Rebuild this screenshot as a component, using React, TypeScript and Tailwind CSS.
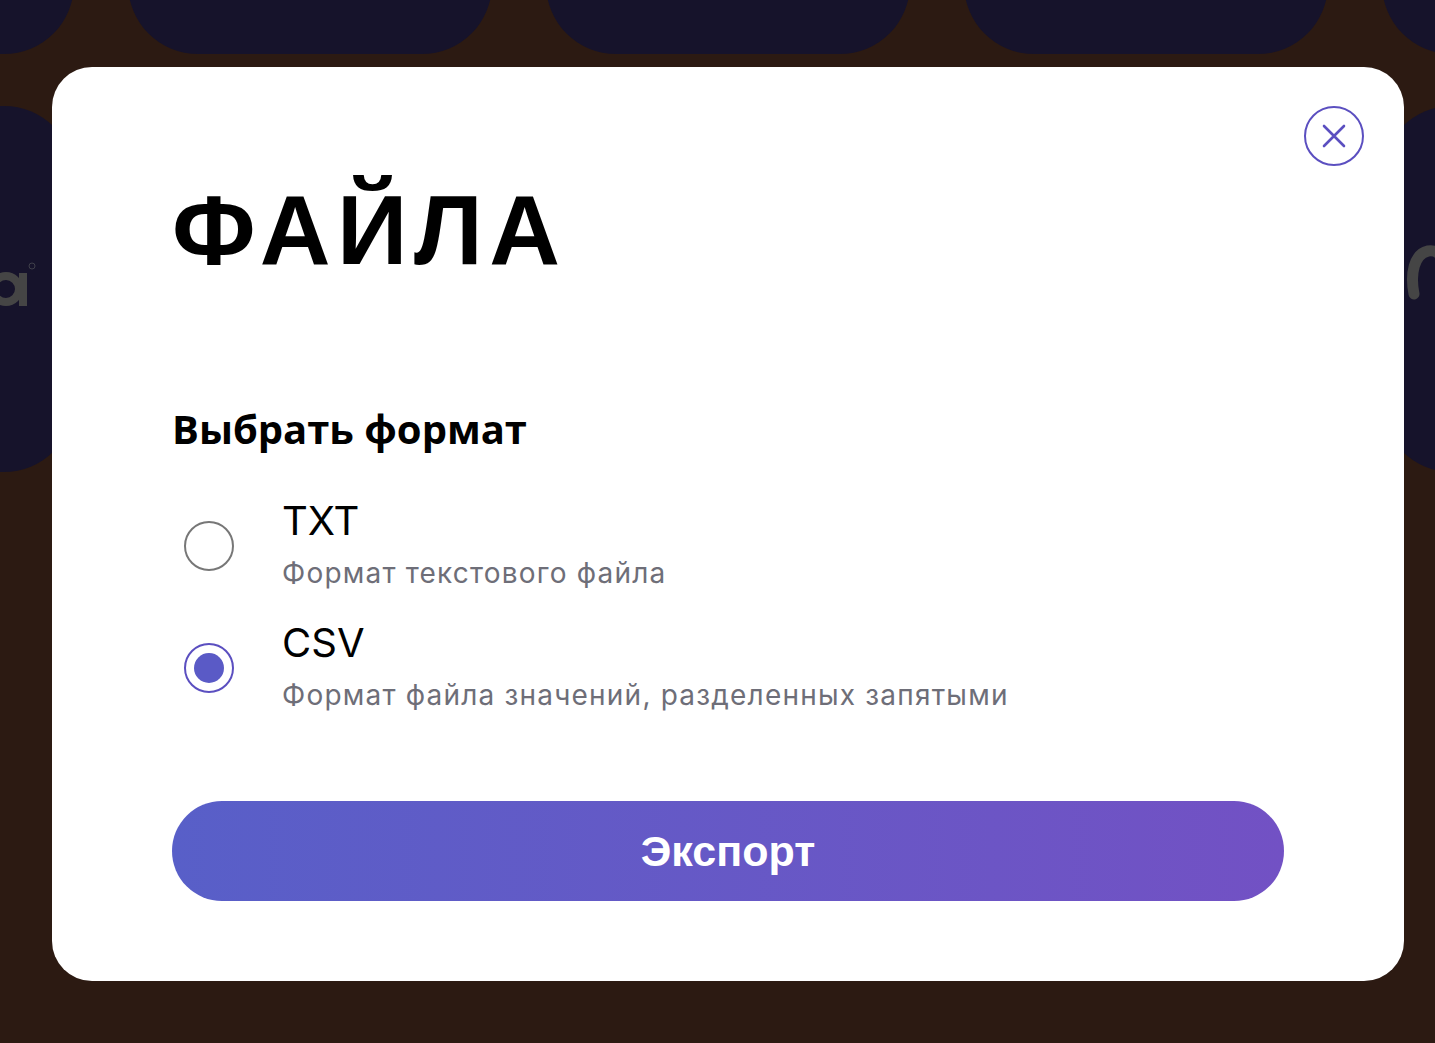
import React from "react";

function BgCard({ children }: { children?: React.ReactNode }) {
  return <div className="relative h-[366px] w-[364px] rounded-[70px] bg-[#16132b]">{children}</div>;
}

export default function App() {
  return (
    <div className="relative h-[1043px] w-full overflow-hidden bg-[#2c1a12]">
      {/* background tiles */}
      <div className="absolute left-[-290px] top-[-312px] grid grid-cols-[repeat(5,364px)] gap-x-[54px] gap-y-[52px]">
        <BgCard />
        <BgCard />
        <BgCard />
        <BgCard />
        <BgCard />
        <BgCard>
          <svg className="absolute left-[290px] top-[150px]" width="40" height="60" viewBox="0 0 40 60">
            <circle cx="6" cy="33" r="13" fill="none" stroke="#454545" strokeWidth="8" />
            <rect x="19" y="17" width="8" height="33" fill="#454545" />
            <circle cx="32" cy="10" r="3" fill="none" stroke="#3f3f4a" strokeWidth="1" />
          </svg>
        </BgCard>
        <BgCard />
        <BgCard />
        <BgCard />
        <BgCard>
          <svg className="absolute left-0 top-[120px]" width="80" height="90" viewBox="0 0 80 90">
            <path d="M32 68 C28 48, 32 28, 46 25 C56 23, 62 32, 64 40" fill="none" stroke="#454545" strokeWidth="11" strokeLinecap="round" />
          </svg>
        </BgCard>
      </div>

      {/* modal */}
      <div className="relative flex pl-[52px] pt-[67px]">
        <div className="relative flex h-[914px] w-[1352px] flex-col rounded-[40px] bg-white px-[120px] pb-[80px] pt-[114px]">
          <button className="absolute right-[40px] top-[39px] flex h-[60px] w-[60px] items-center justify-center rounded-full border-2 border-[#5b4fc0]">
            <svg width="24" height="24" viewBox="0 0 24 24">
              <path d="M2 2 L22 22 M22 2 L2 22" stroke="#5b4fc0" strokeWidth="2.6" strokeLinecap="round" />
            </svg>
          </button>

          <h1 className="font-['Liberation_Sans',Arial,sans-serif] text-[98px] font-bold leading-none tracking-[6.5px] text-black">
            ФАЙЛА
          </h1>

          <h2 className="mt-[130px] font-['Open_Sans',sans-serif] text-[40px] font-bold leading-none text-black">
            Выбрать формат
          </h2>

          <div className="mt-[52px] flex flex-col gap-[36px] font-['Inter',sans-serif]">
            <div className="flex items-start">
              <div className="ml-[12px] mt-[20px] h-[50px] w-[50px] rounded-full border-2 border-[#777777]" />
              <div className="ml-[48px] flex flex-col">
                <div className="text-[40px] leading-none text-black">TXT</div>
                <div className="mt-[18px] text-[28px] leading-none tracking-[1.2px] text-[#6e6e78]">Формат текстового файла</div>
              </div>
            </div>
            <div className="flex items-start">
              <div className="ml-[12px] mt-[20px] flex h-[50px] w-[50px] items-center justify-center rounded-full border-2 border-[#5b4fc0]">
                <div className="h-[30px] w-[30px] rounded-full bg-[#5a5ac6]" />
              </div>
              <div className="ml-[48px] flex flex-col">
                <div className="text-[40px] leading-none text-black">CSV</div>
                <div className="mt-[18px] text-[28px] leading-none tracking-[1.2px] text-[#6e6e78]">
                  Формат файла значений, разделенных запятыми
                </div>
              </div>
            </div>
          </div>

          <button className="mt-auto flex h-[100px] w-full items-center justify-center rounded-full bg-gradient-to-r from-[#585fc8] to-[#7251c4]">
            <span className="font-['Liberation_Sans',Arial,sans-serif] text-[43px] font-bold leading-none text-white">
              Экспорт
            </span>
          </button>
        </div>
      </div>
    </div>
  );
}
